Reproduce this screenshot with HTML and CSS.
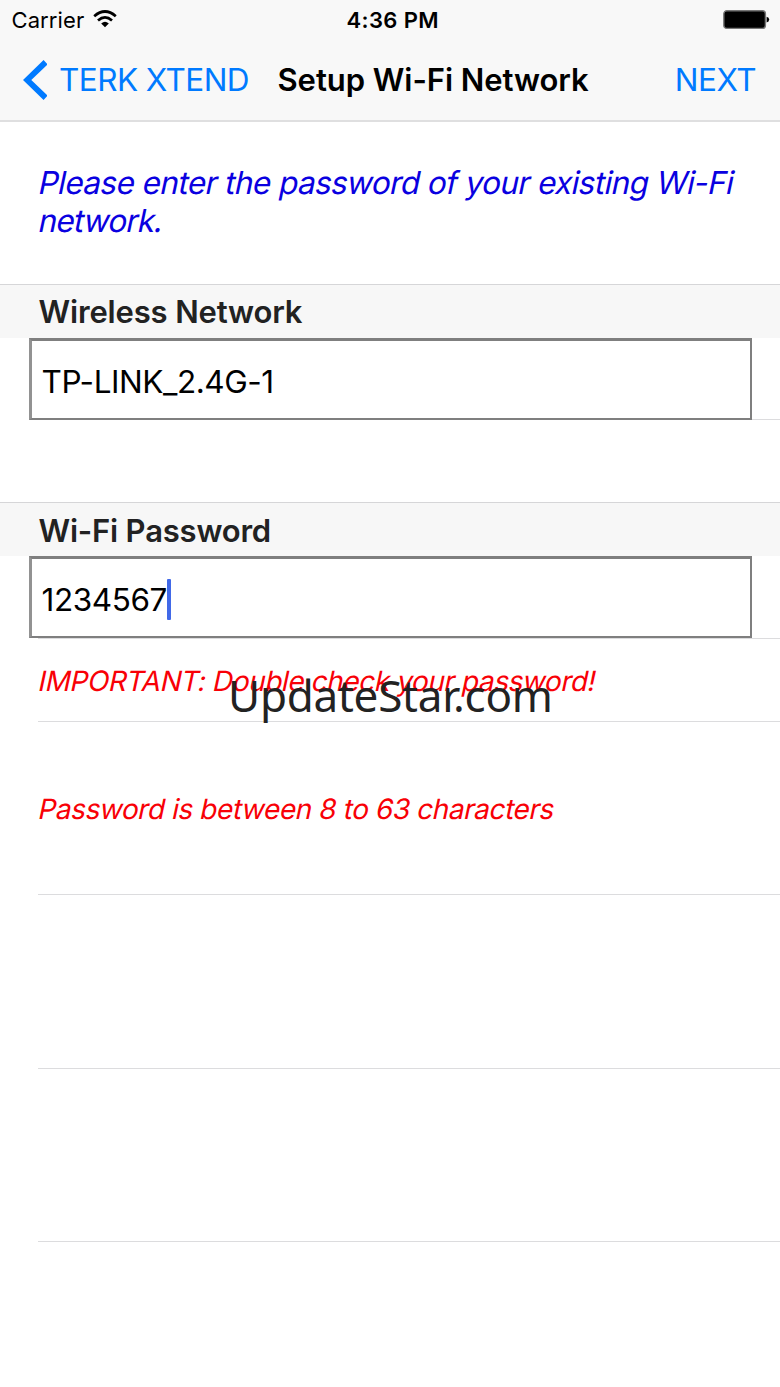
FILE: index.html
```html
<!DOCTYPE html>
<html lang="en">
<head>
<meta charset="utf-8">
<title>Setup Wi-Fi Network</title>
<link rel="stylesheet" href="styles.css">
</head>
<body>
<div class="screen">
  <header class="topbar">
    <div class="status">
      <div class="carrier"><span class="carrier-name">Carrier</span>
        <svg class="wifi" width="24" height="18" viewBox="0 0 24 18" fill="none" stroke="#000" stroke-width="2.7"><path d="M1.2 6.2Q12 -3.2 22.8 6.2"/><path d="M5 10.4Q12 4.2 19 10.4"/><path d="M8.2 13.4Q12 10.2 15.8 13.4L12 17.2Z" fill="#000" stroke="none"/></svg>
      </div>
      <span class="clock">4:36 PM</span>
      <svg class="battery" width="47" height="20" viewBox="0 0 47 20"><rect x=".8" y=".8" width="41.6" height="17.6" rx="3" fill="#000" stroke="#777" stroke-width="1.4"/><path d="M43.6 6.7Q46.2 7.2 46.2 9.6T43.6 12.5Z"/></svg>
    </div>
    <nav class="nav">
      <a class="back"><svg width="24" height="40" viewBox="0 0 24 40" fill="none" stroke="#007aff" stroke-width="5.8"><path d="M22.6 2.2L4.2 20L22.6 37.8"/></svg><span class="back-label">TERK XTEND</span></a>
      <h1 class="title">Setup Wi-Fi Network</h1>
      <a class="next">NEXT</a>
    </nav>
  </header>
  <main>
    <p class="intro"><span class="slanted intro-a">Please enter the password of your existing Wi-Fi</span><br><span class="slanted intro-b">network.</span></p>
    <section class="group">
      <h2 class="heading"><span class="h-network">Wireless Network</span></h2>
      <div class="row field-row"><div class="field"><span class="v-network">TP-LINK_2.4G-1</span></div></div>
    </section>
    <section class="group second">
      <h2 class="heading"><span class="h-password">Wi-Fi Password</span></h2>
      <div class="row field-row"><div class="field"><span class="v-password">1234567</span><i class="caret"></i></div></div>
      <div class="row note important"><span class="slanted">IMPORTANT: Double check your password!</span><div class="watermark">UpdateStar.com</div></div>
      <div class="row note limits"><span class="slanted">Password is between 8 to 63 characters</span></div>
      <div class="row blank"></div>
      <div class="row blank last"></div>
    </section>
  </main>
</div>
</body>
</html>
```
FILE: styles.css
```css
* { box-sizing: border-box; }
body { margin: 0; background: #fff; font-family: Inter, "Liberation Sans", sans-serif; color: #000; }
.screen { width: 780px; height: 1387px; overflow: hidden; background: #fff; }
.topbar { height: 122px; background: #f8f8f8; border-bottom: 2px solid #dfdfe0; white-space: nowrap; }
.status { height: 40px; padding: 0 10.5px 0 11.5px; display: grid; grid-template-columns: 335px 1fr auto; align-items: center; }
.carrier { display: flex; align-items: center; gap: 9px; font-size: 22px; }
.carrier-name { letter-spacing: 0.1px; }
.wifi, .battery, .back svg { display: block; }
.wifi { margin-top: -2px; }
.clock { font-size: 22px; font-weight: 600; letter-spacing: 0.4px; }
.nav { height: 78px; padding: 0 24px 0 23px; display: grid; grid-template-columns: 254.5px 1fr auto; align-items: center; font-size: 31.5px; }
.back { display: flex; align-items: center; gap: 12px; color: #007aff; letter-spacing: -0.55px; }
.back svg { position: relative; top: 1px; }
.title { margin: 0; font-size: 31px; font-weight: 600; letter-spacing: -0.05px; }
.next { color: #007aff; letter-spacing: -0.5px; }
.intro { margin: 0; height: 162px; padding: 42px 39px 0 37px; font-size: 31.5px; line-height: 38px; color: #0a00e0; white-space: nowrap; }
.slanted { display: inline-block; transform: skewX(-12deg); transform-origin: 0 80%; }
.intro-a { letter-spacing: -0.58px; }
.intro-b { letter-spacing: -0.85px; }
.heading { margin: 0; height: 54px; padding-left: 38.5px; background: #f7f7f7; border-top: 1px solid #d6d6d8; font-size: 31px; font-weight: 600; line-height: 54px; letter-spacing: -0.15px; color: #222; white-space: nowrap; }
.row { margin-left: 38px; border-bottom: 1px solid #dcdcde; }
.field-row { height: 82px; }
.field { width: 723px; height: 82px; margin-left: -9.5px; padding: 4px 0 0 10px; display: flex; align-items: center; background: #fff; border: 2px solid #7f7f7f; border-top-width: 3px; border-left-width: 3px; border-left-color: #929292; font-size: 31.5px; }
.v-network { letter-spacing: -0.45px; }
.v-password { letter-spacing: -0.4px; }
.second { margin-top: 82px; }
.second .heading { line-height: 56px; letter-spacing: -0.2px; }
.second .field-row { height: 83px; }
.caret { width: 4px; height: 41px; border-radius: 1px; background: #4169e8; }
.note { font-size: 28px; color: #f80006; display: flex; align-items: center; white-space: nowrap; letter-spacing: -0.43px; }
.note .slanted { position: relative; top: 0.5px; left: -1px; }
.important { height: 83px; position: relative; }
.limits { height: 173px; }
.blank { height: 174px; }
.blank.last { height: 173px; }
.watermark { position: absolute; left: 190px; top: 24px; font: 44px/64px "Noto Sans", sans-serif; letter-spacing: -0.25px; color: #222; }
```
